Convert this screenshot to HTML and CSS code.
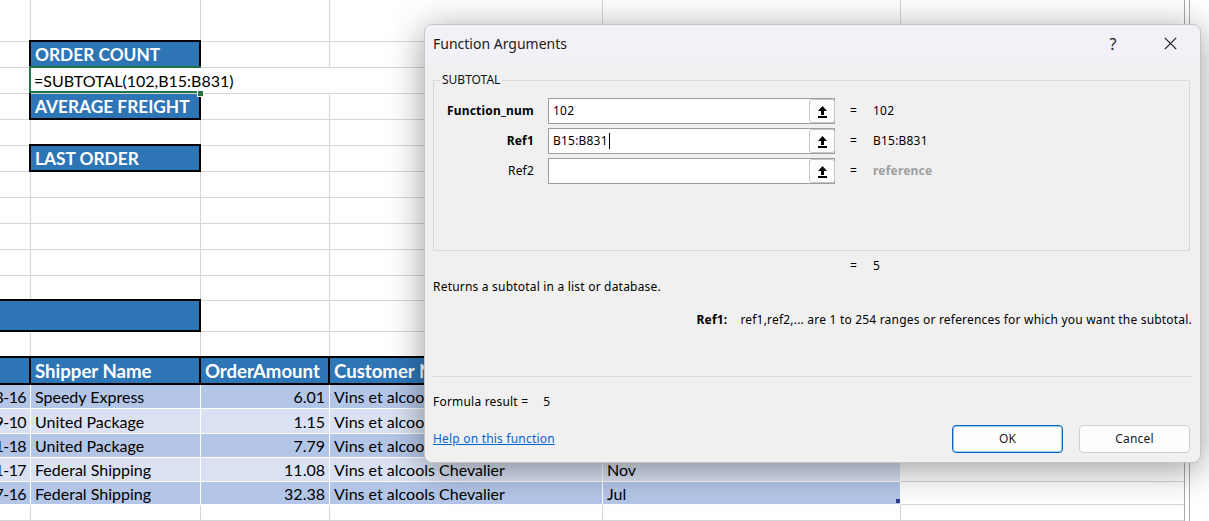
FILE: index.html
```html
<!DOCTYPE html>
<html>
<head>
<meta charset="utf-8">
<link rel="stylesheet" href="styles.css">
</head>
<body>
<div class="sheet">
  <!-- row 1 -->
  <div class="c"></div><div class="c"></div><div class="c"></div><div class="c"></div><div class="c"></div><div class="c"></div><div class="v"></div><div class="e"></div>
  <!-- row 2 -->
  <div class="c"></div><div class="blue">ORDER COUNT</div><div class="c"></div><div class="c"></div><div class="c"></div><div class="c"></div><div class="v"></div><div class="e"></div>
  <!-- row 3 -->
  <div class="c"></div><div class="formula">=SUBTOTAL(102,B15:B831)</div><div class="c"></div><div class="c"></div><div class="v"></div><div class="e"></div>
  <!-- row 4 -->
  <div class="c"></div><div class="blue">AVERAGE FREIGHT</div><div class="c"></div><div class="c"></div><div class="c"></div><div class="c"></div><div class="v"></div><div class="e"></div>
  <!-- row 5 -->
  <div class="c"></div><div class="c"></div><div class="c"></div><div class="c"></div><div class="c"></div><div class="c"></div><div class="v"></div><div class="e"></div>
  <!-- row 6 -->
  <div class="c"></div><div class="blue">LAST ORDER</div><div class="c"></div><div class="c"></div><div class="c"></div><div class="c"></div><div class="v"></div><div class="e"></div>
  <!-- rows 7-11 -->
  <div class="c"></div><div class="c"></div><div class="c"></div><div class="c"></div><div class="c"></div><div class="c"></div><div class="v"></div><div class="e"></div>
  <div class="c"></div><div class="c"></div><div class="c"></div><div class="c"></div><div class="c"></div><div class="c"></div><div class="v"></div><div class="e"></div>
  <div class="c"></div><div class="c"></div><div class="c"></div><div class="c"></div><div class="c"></div><div class="c"></div><div class="v"></div><div class="e"></div>
  <div class="c"></div><div class="c"></div><div class="c"></div><div class="c"></div><div class="c"></div><div class="c"></div><div class="v"></div><div class="e"></div>
  <div class="c"></div><div class="c"></div><div class="c"></div><div class="c"></div><div class="c"></div><div class="c"></div><div class="v"></div><div class="e"></div>
  <!-- row 12 -->
  <div class="bluebar"></div><div class="c"></div><div class="c"></div><div class="c"></div><div class="c"></div><div class="v"></div><div class="e"></div>
  <!-- row 13 -->
  <div class="c"></div><div class="c"></div><div class="c"></div><div class="c"></div><div class="c"></div><div class="c"></div><div class="v"></div><div class="e"></div>
  <!-- row 14 header -->
  <div class="hdr"></div><div class="hdr">Shipper Name</div><div class="hdr">OrderAmount</div><div class="hdr">Customer Name</div><div class="hdr">Month</div><div class="c"></div><div class="v"></div><div class="e"></div>
  <!-- data rows -->
  <div class="d dk num date">8-16</div><div class="d dk">Speedy Express</div><div class="d dk num">6.01</div><div class="d dk">Vins et alcools Chevalier</div><div class="d dk">Aug</div><div class="c"></div><div class="v"></div><div class="e"></div>
  <div class="d lt num date">9-10</div><div class="d lt">United Package</div><div class="d lt num">1.15</div><div class="d lt">Vins et alcools Chevalier</div><div class="d lt">Sep</div><div class="c"></div><div class="v"></div><div class="e"></div>
  <div class="d dk num date">1-18</div><div class="d dk">United Package</div><div class="d dk num">7.79</div><div class="d dk">Vins et alcools Chevalier</div><div class="d dk">Nov</div><div class="c"></div><div class="v"></div><div class="e"></div>
  <div class="d lt num date">1-17</div><div class="d lt">Federal Shipping</div><div class="d lt num">11.08</div><div class="d lt">Vins et alcools Chevalier</div><div class="d lt">Nov</div><div class="c"></div><div class="v"></div><div class="e"></div>
  <div class="d dk num date">7-16</div><div class="d dk">Federal Shipping</div><div class="d dk num">32.38</div><div class="d dk">Vins et alcools Chevalier</div><div class="d dk handle">Jul</div><div class="c"></div><div class="v"></div><div class="e"></div>
  <!-- row 20 -->
  <div class="c"></div><div class="c"></div><div class="c"></div><div class="c"></div><div class="c"></div><div class="c"></div><div class="v"></div><div class="e"></div>
</div>

<div class="dialog">
  <div class="titlebar">
    <div class="title">Function Arguments</div>
    <div class="help">?</div>
    <div class="close">
      <svg width="13" height="13" viewBox="0 0 13 13"><path d="M0.8 0.8 L12.2 12.2 M12.2 0.8 L0.8 12.2" stroke="#1c1c1c" stroke-width="1.2" fill="none"/></svg>
    </div>
  </div>
  <div class="body">
    <fieldset class="group">
      <legend>SUBTOTAL</legend>
      <div class="args">
        <div class="lbl b">Function_num</div>
        <div class="inp"><span class="val">102</span><span class="btn"><svg width="11" height="13" viewBox="0 0 11 13"><path d="M5.5 1 L10 6 L7 6 L7 10 L4 10 L4 6 L1 6 Z" fill="#000"/><rect x="1" y="11" width="9" height="2" fill="#000"/></svg></span></div>
        <div class="eq">=</div>
        <div class="res">102</div>

        <div class="lbl b">Ref1</div>
        <div class="inp"><span class="val">B15:B831</span><span class="caret"></span><span class="btn"><svg width="11" height="13" viewBox="0 0 11 13"><path d="M5.5 1 L10 6 L7 6 L7 10 L4 10 L4 6 L1 6 Z" fill="#000"/><rect x="1" y="11" width="9" height="2" fill="#000"/></svg></span></div>
        <div class="eq">=</div>
        <div class="res">B15:B831</div>

        <div class="lbl">Ref2</div>
        <div class="inp"><span class="val"></span><span class="btn"><svg width="11" height="13" viewBox="0 0 11 13"><path d="M5.5 1 L10 6 L7 6 L7 10 L4 10 L4 6 L1 6 Z" fill="#000"/><rect x="1" y="11" width="9" height="2" fill="#000"/></svg></span></div>
        <div class="eq">=</div>
        <div class="res muted">reference</div>
      </div>
    </fieldset>
    <div class="total"><span class="eq2">=</span><span>5</span></div>
    <div class="desc">Returns a subtotal in a list or database.</div>
    <div class="argdesc"><b>Ref1:</b><span class="argtext">ref1,ref2,... are 1 to 254 ranges or references for which you want the subtotal.</span></div>
    <div class="sep"></div>
    <div class="formres">Formula result =<span class="fr">5</span></div>
    <div class="footer">
      <a class="link">Help on this function</a>
      <div class="buttons">
        <div class="button ok">OK</div>
        <div class="button">Cancel</div>
      </div>
    </div>
  </div>
</div>
</body>
</html>
```
FILE: styles.css
```css
html, body {
  margin: 0;
  padding: 0;
}
body {
  width: 1209px;
  height: 521px;
  overflow: hidden;
  background: #ffffff;
  position: relative;
  font-family: Lato, "Liberation Sans", sans-serif;
}

/* ---------- spreadsheet ---------- */
.sheet {
  display: grid;
  grid-template-columns: 31px 170px 129px 273px 298px 284px 5px 19px;
  grid-template-rows: 42px repeat(9, 26px) 25px 31px 26px 27px 24px 25px 24px 24px 23px 16px;
  font-size: 16px;
  color: #000;
}
.sheet > div {
  box-sizing: border-box;
  min-width: 0;
}
.c {
  border-right: 1px solid #d6d6d6;
  border-bottom: 1px solid #d6d6d6;
}
.v {
  border-right: 1px solid #a9a9a9;
  border-left: 1px solid #a9a9a9;
  margin-left: -1px;
}
.e {
  background: #ffffff;
}
.blue {
  background: #2e75b6;
  color: #fff;
  font-weight: 700;
  font-size: 17.3px;
  border: 2px solid #000;
  margin: -2px 0 0 -2px;
  padding-left: 4px;
  display: flex;
  align-items: center;
  white-space: nowrap;
}
.bluebar {
  grid-column: span 2;
  background: #2e75b6;
  border: 2px solid #000;
  border-left: none;
  margin-top: -2px;
}
.formula {
  grid-column: span 3;
  background: #fff;
  border-bottom: 1px solid #d6d6d6;
  position: relative;
  padding-left: 3px;
  display: flex;
  align-items: center;
  white-space: nowrap;
}
.formula::before {
  content: "";
  position: absolute;
  left: -2px;
  top: -2px;
  bottom: 0;
  width: 172px;
  box-sizing: border-box;
  border: 2px solid #217346;
  border-right: none;
}
.formula::after {
  content: "";
  position: absolute;
  left: 167px;
  bottom: -3px;
  width: 5px;
  height: 5px;
  background: #217346;
  box-shadow: 0 0 0 1px #fff;
}
.hdr {
  background: #2e75b6;
  color: #fff;
  font-weight: 700;
  font-size: 18.6px;
  border: 2px solid #000;
  margin: -2px 0 0 -2px;
  padding-left: 4px;
  display: flex;
  align-items: center;
  white-space: nowrap;
  overflow: hidden;
}
.d {
  border-right: 1px solid #fff;
  border-bottom: 1px solid #fff;
  padding: 0 4px;
  display: flex;
  align-items: center;
  white-space: nowrap;
  overflow: hidden;
}
.date {
  letter-spacing: -0.6px;
  padding-right: 4px;
}
.dk { background: #b4c6e7; }
.lt { background: #d9e1f2; }
.num { justify-content: flex-end; }
.handle { position: relative; }
.handle::after {
  content: "";
  position: absolute;
  right: 0;
  bottom: 1px;
  width: 4px;
  height: 4px;
  background: #2f3f8f;
}

/* ---------- dialog ---------- */
.dialog {
  position: absolute;
  left: 424px;
  top: 24px;
  width: 777px;
  height: 439px;
  box-sizing: border-box;
  border: 1px solid #c4c4c4;
  border-radius: 8px;
  background: #f0f0f0;
  box-shadow: 0 6px 36px rgba(0, 0, 0, 0.4);
  font-family: "Noto Sans", "Open Sans", sans-serif;
  font-size: 12px;
  line-height: 16px;
  color: #000;
  display: flex;
  flex-direction: column;
  overflow: hidden;
}
.titlebar {
  height: 37px;
  flex: none;
  background: #f2f1f7;
  display: flex;
  align-items: center;
  padding-left: 8px;
}
.title {
  flex: 1;
  font-size: 14px;
  color: #1b1b1b;
}
.help {
  width: 54px;
  text-align: center;
  font-size: 16px;
  color: #1f1f1f;
}
.close {
  width: 60px;
  display: flex;
  justify-content: center;
  align-items: center;
}
.body {
  flex: 1;
  padding: 10px 8px 0 8px;
  display: flex;
  flex-direction: column;
  letter-spacing: 0.2px;
}
.group {
  margin: 0 2px 0 0;
  padding: 0;
  border: 1px solid #dadada;
  height: 179px;
  box-sizing: border-box;
  min-width: 0;
}
.group legend {
  margin-left: 6px;
  padding: 0 2px;
  font-size: 12px;
  line-height: 16px;
  color: #111;
  letter-spacing: 0;
}
.args {
  display: grid;
  grid-template-columns: 114px 287px 38px auto;
  grid-auto-rows: 26px;
  row-gap: 4px;
  margin-top: 10px;
}
.lbl {
  text-align: right;
  padding-right: 14px;
  display: flex;
  align-items: center;
  justify-content: flex-end;
}
.b { font-weight: 700; }
.inp {
  background: #fff;
  border: 1px solid #9c9c9c;
  box-sizing: border-box;
  display: flex;
  align-items: center;
  padding-left: 4px;
  position: relative;
}
.val {
  white-space: nowrap;
}
.caret {
  width: 1px;
  height: 16px;
  background: #000;
  margin-left: 1px;
}
.btn {
  margin-left: auto;
  width: 26px;
  height: 24px;
  box-sizing: border-box;
  border: 1px solid #c6c6c6;
  border-radius: 3px;
  background: #fdfdfd;
  display: flex;
  align-items: center;
  justify-content: center;
  margin-right: -1px;
}
.eq {
  padding-left: 15px;
  display: flex;
  align-items: center;
}
.res {
  display: flex;
  align-items: center;
  white-space: nowrap;
}
.muted {
  color: #a0a0a0;
  font-weight: 700;
}
.total {
  margin-top: 7px;
  padding-left: 417px;
  display: flex;
}
.eq2 {
  width: 23px;
}
.desc {
  margin-top: 5px;
}
.argdesc {
  margin-top: 17px;
  text-align: right;
}
.argtext {
  margin-left: 13px;
}
.sep {
  margin-top: 48px;
  height: 1px;
  background: #dadada;
}
.formres {
  margin-top: 17px;
}
.fr {
  margin-left: 15px;
}
.footer {
  margin-top: 15px;
  height: 28px;
  display: flex;
  align-items: center;
}
.link {
  color: #0b63ce;
  text-decoration: underline;
  flex: 1;
}
.buttons {
  display: flex;
  gap: 16px;
  margin-right: 2px;
}
.button {
  width: 111px;
  height: 28px;
  box-sizing: border-box;
  border: 1px solid #d0d0d0;
  border-radius: 4px;
  background: #fdfdfd;
  display: flex;
  align-items: center;
  justify-content: center;
  color: #1b1b1b;
}
.ok {
  border: 1px solid #0067c0;
  box-shadow: inset 0 0 0 1px rgba(0, 103, 192, 0.35);
}
```
